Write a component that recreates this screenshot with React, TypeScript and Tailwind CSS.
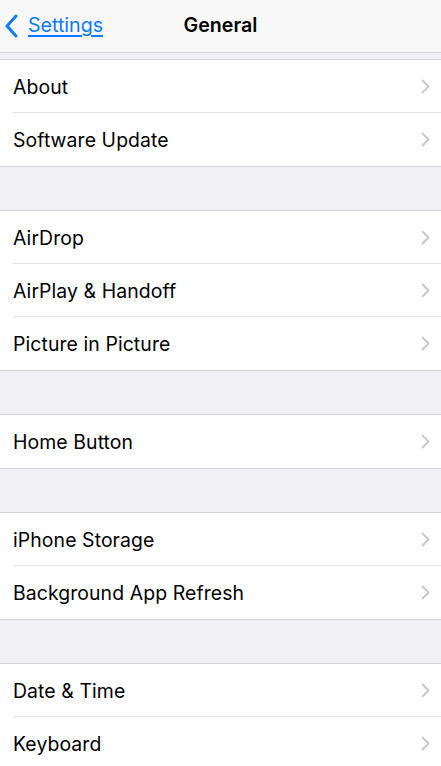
import React from "react";

const groups: string[][] = [
  ["About", "Software Update"],
  ["AirDrop", "AirPlay & Handoff", "Picture in Picture"],
  ["Home Button"],
  ["iPhone Storage", "Background App Refresh"],
  ["Date & Time", "Keyboard"],
];

function Chevron() {
  return (
    <svg width="9" height="15" viewBox="0 0 9 15" fill="none" className="shrink-0">
      <path d="M1.5 1.5L7.5 7.5L1.5 13.5" stroke="#c7c7cc" strokeWidth="1.8" strokeLinecap="round" strokeLinejoin="round" />
    </svg>
  );
}

function Row({ label, last }: { label: string; last: boolean }) {
  return (
    <div className="flex h-[53px] items-stretch pl-[13px] bg-white">
      <div className={`flex flex-1 items-center justify-between pr-[11px] ${last ? "" : "border-b border-[#e3e3e6]"}`}>
        <span className="pt-[3px] text-[19.4px] text-black tracking-[0.1px]">{label}</span>
        <Chevron />
      </div>
    </div>
  );
}

export default function App() {
  return (
    <div className="w-[441px] h-[766px] overflow-hidden bg-[#f0f0f5]" style={{ fontFamily: "Inter, 'Noto Sans', sans-serif" }}>
      <div className="relative flex h-[53px] items-center justify-center border-b border-[#d4d4d8] bg-[#f8f8f8]">
        <div className="absolute left-[5px] top-0 flex h-[52px] items-center gap-[10px]">
          <svg width="13" height="24" viewBox="0 0 13 24" fill="none">
            <path d="M11 2L2 12L11 22" stroke="#0a7cff" strokeWidth="3" strokeLinecap="round" strokeLinejoin="round" />
          </svg>
          <span className="text-[19.6px] text-[#0a7cff] underline underline-offset-[3px] decoration-[1.5px]">Settings</span>
        </div>
        <span className="text-[19.6px] font-semibold text-black">General</span>
      </div>
      <div className="flex flex-col gap-[43px] pt-[6px]">
        {groups.map((g, gi) => (
          <div key={gi} className="border-y border-[#d4d4d8] bg-white">
            {g.map((label, i) => (
              <Row key={label} label={label} last={i === g.length - 1} />
            ))}
          </div>
        ))}
      </div>
    </div>
  );
}
